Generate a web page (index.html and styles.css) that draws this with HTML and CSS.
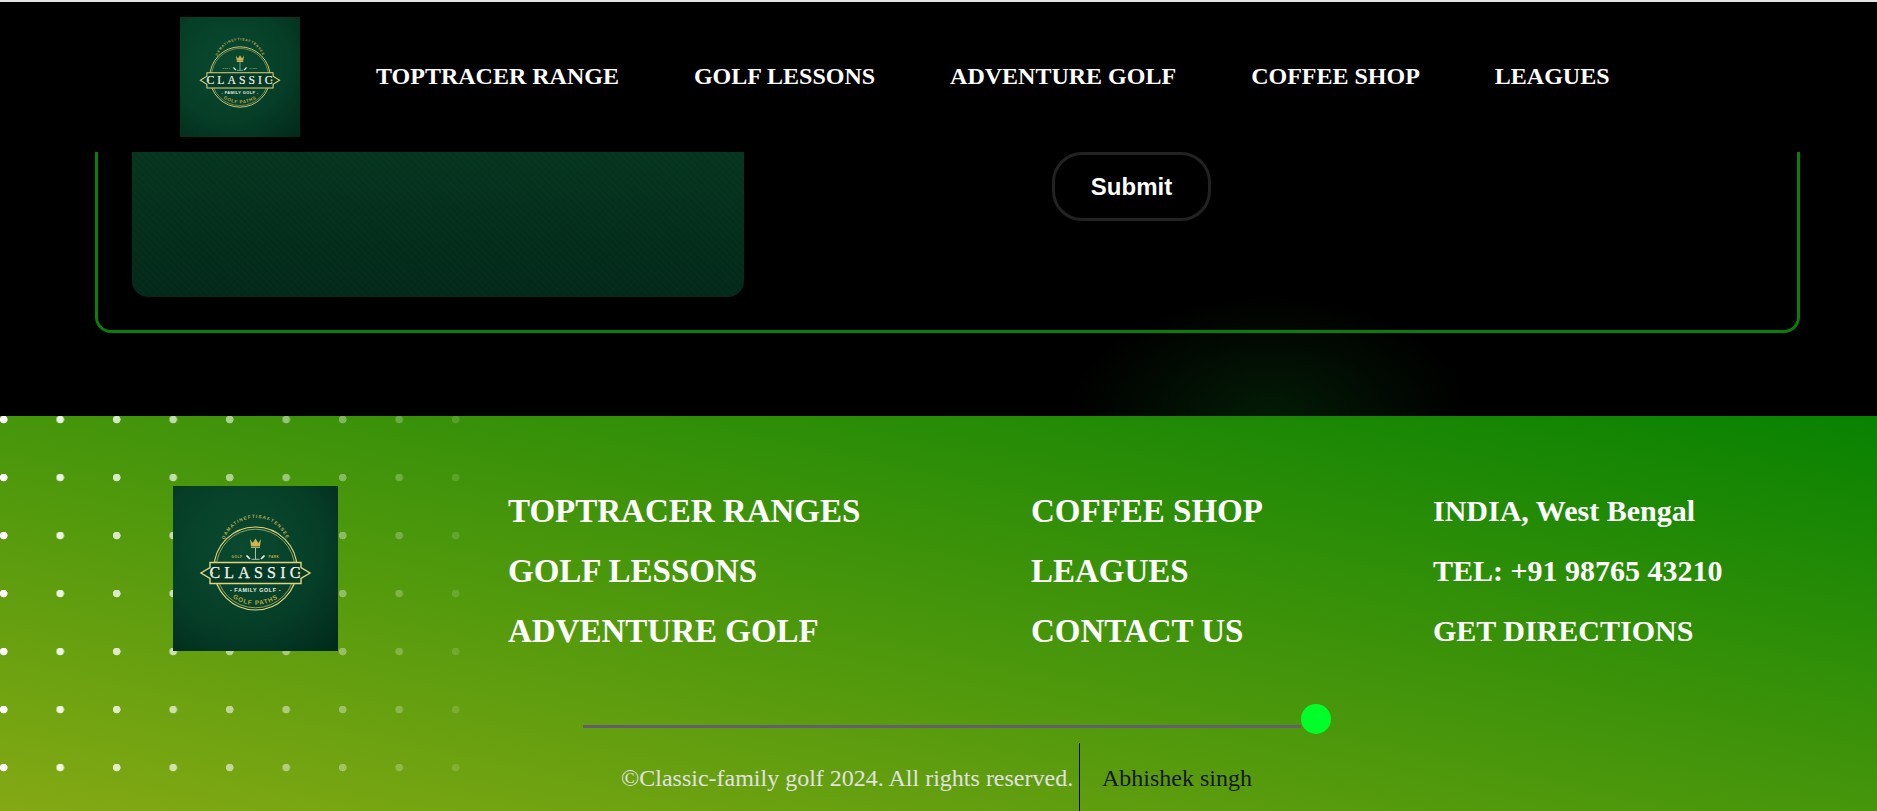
FILE: index.html
```html
<!DOCTYPE html>
<html lang="en">
<head>
  <meta charset="UTF-8">
  <title>Classic Family Golf</title>
  <link rel="stylesheet" href="styles.css">
</head>
<body>
  <svg class="defs" width="0" height="0" aria-hidden="true">
    <defs>
      <radialGradient id="logoBg" cx="42%" cy="38%" r="80%">
        <stop offset="0" stop-color="#0a4a2f"/>
        <stop offset="0.6" stop-color="#063e28"/>
        <stop offset="1" stop-color="#012c1b"/>
      </radialGradient>
      <path id="arcTop" d="M50.5 73 A33 33 0 1 1 114.5 73"/>
      <path id="arcBottom" d="M60 112 A40 40 0 0 0 105 112"/>
      <symbol id="logo" viewBox="0 0 165 165">
        <rect width="165" height="165" fill="url(#logoBg)"/>
        <circle cx="82.5" cy="82.5" r="41.5" fill="none" stroke="#e2d47e" stroke-width="1.2"/>
        <circle cx="82.5" cy="82.5" r="39.3" fill="none" stroke="#d8c56a" stroke-width="0.7"/>
        <text class="logo-arc"><textPath href="#arcTop" startOffset="50%" text-anchor="middle">DAMATINEFTISAFTENSEE</textPath></text>
        <path d="M77 53 L79.7 57 L82.5 52.5 L85.3 57 L88 53 L87 60 H78 Z" fill="#cdb456"/>
        <rect x="78" y="60.5" width="9" height="1.4" fill="#cdb456"/>
        <path d="M82.5 62 V73 M78.5 73.3 H86.5" stroke="#cfe0cf" stroke-width="0.8" fill="none"/>
        <path d="M73.5 69.5 L77 73 M91.5 69.5 L88 73" stroke="#eef4ee" stroke-width="1.7"/>
        <text class="logo-tiny" x="64" y="71.5" text-anchor="middle">GOLF</text>
        <text class="logo-tiny" x="101" y="71.5" text-anchor="middle">PARK</text>
        <path d="M37 76.5 H128 V81.5 L137 87 L128 92.5 V97.5 H37 V92.5 L28 87 L37 81.5 Z" fill="#053a26" stroke="#e2d47e" stroke-width="1.4"/>
        <text class="logo-name" x="84" y="92" text-anchor="middle">CLASSIC</text>
        <circle cx="39" cy="87" r="1.3" fill="#e2d47e"/>
        <circle cx="126" cy="87" r="1.3" fill="#e2d47e"/>
        <text class="logo-sub" x="82.5" y="106" text-anchor="middle">- FAMILY GOLF -</text>
        <text class="logo-path"><textPath href="#arcBottom" startOffset="50%" text-anchor="middle">GOLF PATHS</textPath></text>
      </symbol>
    </defs>
  </svg>

  <header class="topnav">
    <svg class="nav-logo" role="img" aria-label="Classic Family Golf"><use href="#logo"/></svg>
    <nav class="nav-links">
      <a href="#">TOPTRACER RANGE</a>
      <a href="#">GOLF LESSONS</a>
      <a href="#">ADVENTURE GOLF</a>
      <a href="#">COFFEE SHOP</a>
      <a href="#">LEAGUES</a>
    </nav>
  </header>

  <section class="contact">
    <div class="contact-box">
      <div class="contact-panel"></div>
      <form class="contact-form">
        <button type="button" class="submit-btn">Submit</button>
      </form>
    </div>
  </section>

  <footer class="site-footer">
    <div class="dots"></div>
    <div class="footer-main">
      <svg class="footer-logo" role="img" aria-label="Classic Family Golf"><use href="#logo"/></svg>
      <ul class="footer-col">
        <li>TOPTRACER RANGES</li>
        <li>GOLF LESSONS</li>
        <li>ADVENTURE GOLF</li>
      </ul>
      <ul class="footer-col">
        <li>COFFEE SHOP</li>
        <li>LEAGUES</li>
        <li>CONTACT US</li>
      </ul>
      <ul class="footer-col footer-col-small">
        <li>INDIA, West Bengal</li>
        <li>TEL: +91 98765 43210</li>
        <li>GET DIRECTIONS</li>
      </ul>
    </div>
    <div class="footer-rule">
      <div class="rule-line"></div>
      <div class="rule-dot"></div>
    </div>
    <div class="footer-bottom">
      <span class="copyright">©Classic-family golf 2024. All rights reserved.</span>
      <span class="credit">Abhishek singh</span>
    </div>
  </footer>
</body>
</html>
```

FILE: styles.css
```css
html, body {
  margin: 0;
  padding: 0;
}
body {
  background: #000;
  border-top: 2px solid #e4e4e4;
  font-family: "Liberation Serif", "Times New Roman", serif;
  color: #fff;
  overflow: hidden;
}
.defs {
  display: block;
  height: 0;
}

/* top bar */
.topnav {
  height: 150px;
  display: flex;
  background: #000;
}
.nav-logo {
  width: 120px;
  height: 120px;
  margin: 15px 0 0 180px;
}
.nav-links {
  display: flex;
  gap: 75px;
  margin: 0 0 0 76px;
  padding-top: 59px;
}
.nav-links a {
  color: #fff;
  font-size: 24px;
  font-weight: bold;
  line-height: 30px;
  text-decoration: none;
}

/* contact form, scrolled under the bar */
.contact {
  height: 264px;
  background: radial-gradient(ellipse 200px 120px at 1268px 100%, #031c06 0%, #020f03 45%, #000 100%);
}
.contact-box {
  height: 145px;
  margin: 0 77px 0 95px;
  border: 3px solid #088008;
  border-top: none;
  border-radius: 0 0 16px 16px;
  padding: 0 0 33px 34px;
  display: flex;
}
.contact-panel {
  width: 612px;
  height: 145px;
  border-radius: 0 0 16px 16px;
  background:
    repeating-linear-gradient(45deg, rgba(255, 255, 255, 0.006) 0 2px, transparent 2px 5px),
    repeating-linear-gradient(-45deg, rgba(0, 0, 0, 0.025) 0 2px, transparent 2px 5px),
    linear-gradient(180deg, #05351f 0%, #03291a 100%);
}
.contact-form {
  margin-left: 308px;
}
.submit-btn {
  width: 159px;
  height: 69px;
  background: #000;
  border: 3px solid #222;
  border-radius: 30px;
  color: #fff;
  font-family: "Liberation Sans", Arial, sans-serif;
  font-size: 24px;
  font-weight: bold;
}

/* footer */
.site-footer {
  height: 395px;
  position: relative;
  overflow: hidden;
  background: linear-gradient(to top right, #84a914, #088202);
}
.dots {
  position: absolute;
  left: 0;
  top: 0;
  width: 465px;
  height: 395px;
  background-image: radial-gradient(circle at 3.7px 3.5px, #fff 3.5px, transparent 4.2px);
  background-size: 56.5px 58px;
  -webkit-mask-image: linear-gradient(to right, #000 0%, rgba(0, 0, 0, 0.12) 100%);
  mask-image: linear-gradient(to right, #000 0%, rgba(0, 0, 0, 0.12) 100%);
}
.footer-main {
  position: relative;
  display: grid;
  grid-template-columns: 335px 523px 402px auto;
  padding: 70px 0 0 173px;
  height: 218px;
}
.footer-logo {
  width: 165px;
  height: 165px;
}
.footer-col {
  list-style: none;
  margin: -5px 0 0;
  padding: 0;
}
.footer-col li {
  font-size: 33px;
  font-weight: bold;
  line-height: 60px;
  white-space: nowrap;
}
.footer-col-small li {
  font-size: 30px;
}
.footer-rule {
  position: relative;
  display: flex;
  align-items: flex-end;
  margin: 0 0 0 583px;
}
.rule-line {
  width: 718px;
  height: 3px;
  margin-bottom: 6px;
  background: #655f6b;
}
.rule-dot {
  width: 30px;
  height: 30px;
  border-radius: 50%;
  background: #00ff2a;
}
.footer-bottom {
  position: relative;
  display: flex;
  height: 68px;
  margin: 9px 0 0 621px;
  font-size: 24px;
}
.copyright {
  color: #e2e2e2;
  line-height: 70px;
  width: 458px;
}
.credit {
  color: #161616;
  line-height: 70px;
  border-left: 1px solid #000;
  padding-left: 22px;
}

/* text inside the logo */
.logo-arc {
  font: bold 4.6px "Liberation Sans", sans-serif;
  letter-spacing: 1.1px;
  fill: #bfae50;
}
.logo-tiny {
  font: bold 3.2px "Liberation Sans", sans-serif;
  letter-spacing: 0.5px;
  fill: #c8ae52;
}
.logo-name {
  font: normal 16px "Liberation Serif", serif;
  letter-spacing: 4.2px;
  fill: #f4f4ea;
  stroke: #f4f4ea;
  stroke-width: 0.25px;
}
.logo-sub {
  font: bold 5.4px "Liberation Sans", sans-serif;
  letter-spacing: 0.6px;
  fill: #e8eee0;
}
.logo-path {
  font: bold 6.4px "Liberation Sans", sans-serif;
  letter-spacing: 0.8px;
  fill: #b8a848;
}
```
